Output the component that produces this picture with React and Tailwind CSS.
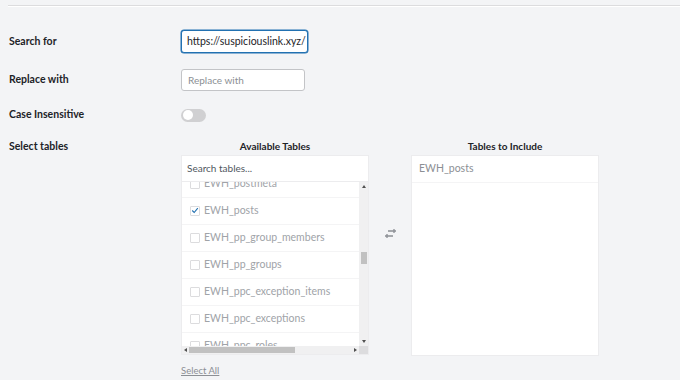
import React from "react";

const rows = [
  { name: "EWH_postmeta", checked: false },
  { name: "EWH_posts", checked: true },
  { name: "EWH_pp_group_members", checked: false },
  { name: "EWH_pp_groups", checked: false },
  { name: "EWH_ppc_exception_items", checked: false },
  { name: "EWH_ppc_exceptions", checked: false },
  { name: "EWH_ppc_roles", checked: false },
];

const Check = ({ checked }) => (
  <span className="w-[10px] h-[10px] border border-[#dcdcde] rounded-[1px] bg-white flex items-center justify-center shrink-0">
    {checked && (
      <svg width="10" height="9" viewBox="0 0 10 9" className="-mt-[1px]">
        <path d="M1.5 4.5 L4 7 L8.5 1.5" fill="none" stroke="#2271b1" strokeWidth="1.4" />
      </svg>
    )}
  </span>
);

const SwapIcon = () => (
  <svg width="15" height="11" viewBox="0 0 15 11">
    <path d="M5 3 H13 M11 1 V5" fill="none" stroke="#8c8f94" strokeWidth="1.3" />
    <path d="M10 8 H2 M4 6 V10" fill="none" stroke="#8c8f94" strokeWidth="1.3" />
  </svg>
);

export default function App() {
  return (
    <div className="w-[680px] h-[380px] overflow-hidden bg-[#f3f4f6] text-[#1d2327] font-['Lato',sans-serif]">
      <div className="pt-[5px] pl-[8px]">
        <div className="h-px bg-[#dcdcde] border-b border-white box-content" />
      </div>

      <div className="pl-[9px]">
        <div className="flex items-center mt-[23px] h-[23px]">
          <div className="w-[172px] text-[10.5px] font-bold">Search for</div>
          <div className="w-[127px] h-[23px] border border-[#2271b1] rounded-[3px] bg-white px-[5px] flex items-center text-[10.5px] whitespace-nowrap overflow-hidden shadow-[0_0_0_0.5px_#2271b1]">
            https://suspiciouslink.xyz/
          </div>
        </div>

        <div className="flex items-center mt-[16px] h-[22px]">
          <div className="w-[172px] text-[10.5px] font-bold">Replace with</div>
          <div className="w-[124px] h-[22px] border border-[#c3c4c7] rounded-[3px] bg-white px-[6px] flex items-center text-[10px] text-[#8c8f94]">
            Replace with
          </div>
        </div>

        <div className="flex items-center mt-[17px] h-[14px]">
          <div className="w-[172px] text-[10.5px] font-bold">Case Insensitive</div>
          <div className="w-[25px] h-[13px] rounded-full bg-[#d0d0d2] flex items-center px-[1.5px]">
            <span className="w-[10px] h-[10px] rounded-full bg-white" />
          </div>
        </div>

        <div className="flex mt-[17px]">
          <div className="w-[172px] text-[10.5px] font-bold leading-[14px]">Select tables</div>
          <div className="flex flex-col">
            <div className="flex">
              <div className="w-[188px] flex flex-col">
                <div className="text-center text-[10px] font-bold leading-[14px] h-[16px]">Available Tables</div>
                <div className="h-[200px] bg-white border border-[#ececee] flex flex-col">
                  <div className="h-[26px] border-b border-[#ececee] flex items-center px-[5px] text-[10px] text-[#50575e]">
                    Search tables...
                  </div>
                  <div className="flex flex-1 min-h-0">
                    <div className="flex-1 overflow-hidden">
                      <div className="-mt-[11px]">
                        {rows.map((r) => (
                          <div key={r.name} className="h-[27px] flex items-center gap-[4px] pl-[8px] border-b border-[#f4f4f5] text-[10.5px] text-[#a0a3a8] whitespace-nowrap">
                            <Check checked={r.checked} />
                            <span>{r.name}</span>
                          </div>
                        ))}
                      </div>
                    </div>
                    <div className="w-[9px] bg-[#f0f0f1] flex flex-col items-center">
                      <span className="mt-[3px] w-0 h-0 border-x-[2.5px] border-x-transparent border-b-[3px] border-b-[#505050]" />
                      <div className="mt-[64px] w-[6px] h-[12px] bg-[#c1c1c1]" />
                      <div className="flex-1" />
                      <span className="mb-[3px] w-0 h-0 border-x-[2.5px] border-x-transparent border-t-[3px] border-t-[#505050]" />
                    </div>
                  </div>
                  <div className="h-[8px] flex bg-[#f0f0f1]">
                    <div className="flex-1 flex items-center px-[2px]">
                      <span className="w-0 h-0 border-y-[2.5px] border-y-transparent border-r-[3px] border-r-[#505050]" />
                      <div className="ml-[2px] w-[106px] h-[6px] bg-[#c1c1c1]" />
                      <div className="flex-1" />
                      <span className="w-0 h-0 border-y-[2.5px] border-y-transparent border-l-[3px] border-l-[#505050]" />
                    </div>
                    <div className="w-[9px] bg-[#dcdcde]" />
                  </div>
                </div>
              </div>

              <div className="w-[42px] flex justify-center pt-[89px]">
                <SwapIcon />
              </div>

              <div className="w-[188px] flex flex-col">
                <div className="text-center text-[10px] font-bold leading-[14px] h-[16px]">Tables to Include</div>
                <div className="h-[201px] bg-white border border-[#ececee]">
                  <div className="h-[27px] flex items-center px-[7px] border-b border-[#f4f4f5] text-[10.5px] text-[#8c8f94]">
                    EWH_posts
                  </div>
                </div>
              </div>
            </div>
            <div className="mt-[8px] text-[9.5px] text-[#8c8f94] underline">Select All</div>
          </div>
        </div>
      </div>
    </div>
  );
}
